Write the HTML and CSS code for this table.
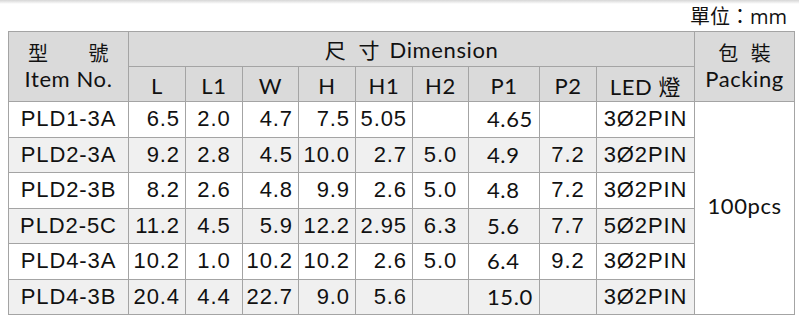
FILE: index.html
```html
<!DOCTYPE html>
<html lang="zh-Hant">
<head>
<meta charset="utf-8">
<title>PLD</title>
<link rel="stylesheet" href="styles.css">
</head>
<body>
<div class="topshade"></div>
<div class="unit">單位：mm</div>
<table class="spec">
  <colgroup>
    <col class="c-item"><col class="c57"><col class="c57"><col class="c56"><col class="c57"><col class="c57"><col class="c56"><col class="c71"><col class="c57"><col class="c98"><col class="c100">
  </colgroup>
  <thead>
    <tr class="h1">
      <th rowspan="2" class="item-h"><span class="zh-pair"><span>型</span><span>號</span></span><span class="en">Item No.</span></th>
      <th colspan="9" class="dim"><span class="zh">尺 寸</span> Dimension</th>
      <th rowspan="2" class="pack-h"><span class="zh">包 裝</span><span class="en">Packing</span></th>
    </tr>
    <tr class="h2">
      <th>L</th><th>L1</th><th>W</th><th>H</th><th>H1</th><th>H2</th><th>P1</th><th>P2</th><th>LED <span class="zh">燈</span></th>
    </tr>
  </thead>
  <tbody>
    <tr><td class="ctr">PLD1-3A</td><td class="r">6.5</td><td class="ctr">2.0</td><td class="r">4.7</td><td class="r">7.5</td><td class="r">5.05</td><td class="ctr"></td><td class="p1">4.65</td><td class="ctr"></td><td class="ctr">3Ø2PIN</td><td rowspan="6" class="pack">100pcs</td></tr>
    <tr class="alt"><td class="ctr">PLD2-3A</td><td class="r">9.2</td><td class="ctr">2.8</td><td class="r">4.5</td><td class="r">10.0</td><td class="r">2.7</td><td class="ctr">5.0</td><td class="p1">4.9</td><td class="ctr">7.2</td><td class="ctr">3Ø2PIN</td></tr>
    <tr><td class="ctr">PLD2-3B</td><td class="r">8.2</td><td class="ctr">2.6</td><td class="r">4.8</td><td class="r">9.9</td><td class="r">2.6</td><td class="ctr">5.0</td><td class="p1">4.8</td><td class="ctr">7.2</td><td class="ctr">3Ø2PIN</td></tr>
    <tr class="alt"><td class="ctr">PLD2-5C</td><td class="r">11.2</td><td class="ctr">4.5</td><td class="r">5.9</td><td class="r">12.2</td><td class="r">2.95</td><td class="ctr">6.3</td><td class="p1">5.6</td><td class="ctr">7.7</td><td class="ctr">5Ø2PIN</td></tr>
    <tr><td class="ctr">PLD4-3A</td><td class="r">10.2</td><td class="ctr">1.0</td><td class="r">10.2</td><td class="r">10.2</td><td class="r">2.6</td><td class="ctr">5.0</td><td class="p1">6.4</td><td class="ctr">9.2</td><td class="ctr">3Ø2PIN</td></tr>
    <tr class="alt"><td class="ctr">PLD4-3B</td><td class="r">20.4</td><td class="ctr">4.4</td><td class="r">22.7</td><td class="r">9.0</td><td class="r">5.6</td><td class="ctr"></td><td class="p1">15.0</td><td class="ctr"></td><td class="ctr">3Ø2PIN</td></tr>
  </tbody>
</table>
</body>
</html>
```
FILE: styles.css
```css
html, body {
  margin: 0;
  padding: 0;
  background: #ffffff;
}
body {
  padding: 0 5px 0 8px;
  color: #111111;
  font-family: "Liberation Sans", Arial, sans-serif;
}
.topshade {
  height: 4px;
  margin: 0 -5px 0 -8px;
  background: linear-gradient(#d6d6d6, #ffffff);
}
.unit {
  height: 27px;
  text-align: right;
  padding-right: 7px;
  font-family: "Open Sans", "Noto Sans CJK TC", sans-serif;
  font-size: 20px;
  line-height: 26px;
  box-sizing: border-box;
}
.zh, .zh-pair {
  font-family: "Noto Sans CJK TC", sans-serif;
}
.spec {
  border-collapse: collapse;
  table-layout: fixed;
  width: 786px;
}
.c-item { width: 120px; }
.c56 { width: 56px; }
.c57 { width: 57px; }
.c71 { width: 71px; }
.c98 { width: 98px; }
.c100 { width: 100px; }
.spec th, .spec td {
  border: 1px solid #a4a4a4;
  padding: 0;
  overflow: hidden;
  white-space: nowrap;
}
.spec th {
  background: #dadada;
  font-family: "Lato", "Noto Sans CJK TC", sans-serif;
  font-weight: 400;
  font-size: 22px;
  letter-spacing: 0.6px;
}
.h1 { height: 35px; }
.h2 { height: 35px; }
.spec .h2 th { padding-top: 2px; }
.item-h, .pack-h {
  vertical-align: middle;
}
.item-h span, .pack-h span { display: block; }
.spec .item-h .zh-pair {
  display: flex;
  justify-content: space-between;
  padding: 0 19px 0 19px;
  font-size: 20px;
  line-height: 24px;
}
.spec .item-h .en, .spec .pack-h .en { line-height: 27px; }
.spec .pack-h .zh {
  font-size: 20px;
  line-height: 24px;
  letter-spacing: 4px;
  padding-left: 4px;
}
.dim .zh { font-size: 21px; letter-spacing: 4px; }
.spec td {
  font-size: 22px;
  letter-spacing: 0.9px;
  height: 34.5px;
  line-height: 24px;
}
.spec tr.alt td { background: #f0f0f0; }
.spec td.pack { background: #ffffff; }
.spec td.ctr { text-align: center; }
.spec td.r { text-align: right; padding-right: 5px; }
.spec td.p1 {
  text-align: left;
  padding-left: 18px;
  font-family: "Lato", sans-serif;
  letter-spacing: 0.6px;
}
.spec td.pack {
  text-align: center;
  vertical-align: middle;
  font-family: "Lato", sans-serif;
  letter-spacing: 0.6px;
  padding-bottom: 4px;
}
```
